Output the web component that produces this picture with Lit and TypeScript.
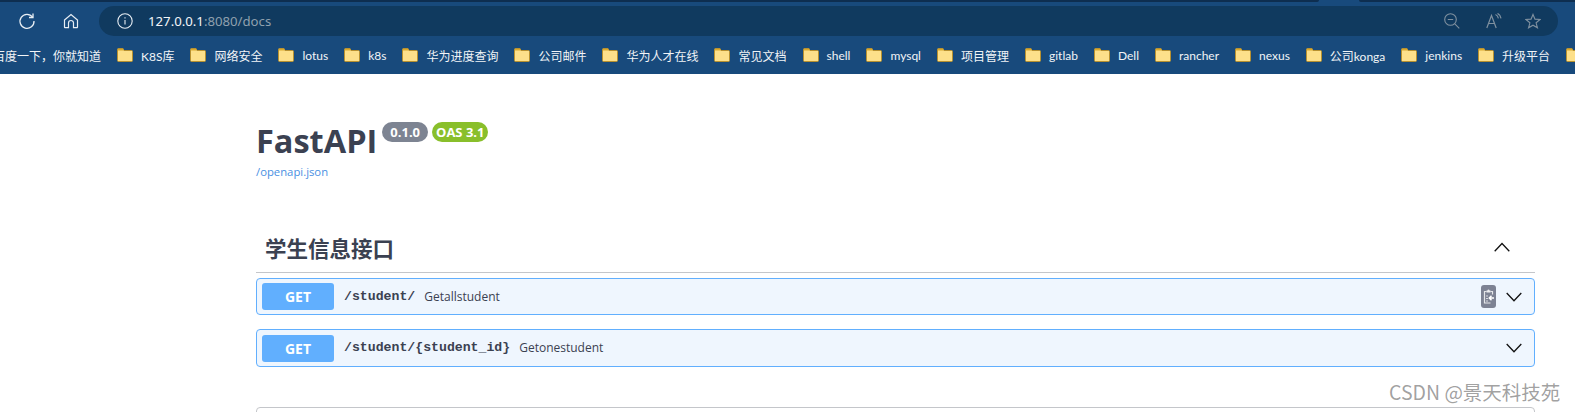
import { LitElement, html, css } from "lit";
import { customElement } from "lit/decorators.js";

const BOOKMARKS = ["K8S库","网络安全","lotus","k8s","华为进度查询","公司邮件","华为人才在线","常见文档","shell","mysql","项目管理","gitlab","Dell","rancher","nexus","公司konga","jenkins","升级平台"];

const folder = html`<svg class="folder" width="16" height="14" viewBox="0 0 16 14"><path d="M.5 2V12.5a1 1 0 0 0 1 1h13a1 1 0 0 0 1-1V3.5a1 1 0 0 0-1-1H7L6 .5H1.5a1 1 0 0 0-1 1z" fill="#fde08a" stroke="#b8912f"/><path d="M1 1h5l.7 1.6H1z" fill="#d9a92f"/></svg>`;

const chevron = (up: boolean) => html`<svg class="chev ${up ? "chev-up" : ""}" width="16" height="10" viewBox="0 0 16 10"><path d="${up ? "M.7 9.200 8 1.500 15.300 9.200" : "M.7 1 8 8.700 15.300 1"}" fill="none" stroke="#111" stroke-width="1.300"/></svg>`;

@customElement("app-root")
export class AppRoot extends LitElement {
  static styles = css`
    :host { display: block; width: 1575px; height: 412px; overflow: hidden; position: relative; background: #fff; font-family: "Lato", "Noto Sans CJK SC", sans-serif; }
    .tabs { display: flex; height: 6px; background: #184a7c; }
    .tab-dark { height: 2px; background: #0e2e50; }
    .tab-a { flex: 0 0 1319px; border-bottom-right-radius: 2px; }
    .tab-b { flex: 1; margin-left: 40px; border-bottom-left-radius: 2px; }
    .toolbar { display: flex; align-items: center; height: 30px; background: #184a7c; }
    .nav { flex: none; stroke: #e8eef4; fill: none; }
    .reload { margin-left: 18px; }
    .home { margin-left: 27px; }
    .address { display: flex; align-items: center; margin-left: 20px; width: 1459px; height: 30px; box-sizing: border-box; padding: 0 17px 0 18px; border-radius: 15px; background: #103a5f; }
    .url { margin-left: 15px; font-size: 13.2px; font-family: "Noto Sans", sans-serif; color: #8fa0ae; white-space: pre; }
    .url b { font-weight: 400; color: #f2f5f8; }
    .spacer { flex: 1; }
    .addr-ic { flex: none; stroke: #7f909f; fill: none; }
    .zoom-ic { margin-right: 26px; }
    .read-ic { margin-right: 23px; }
    .bookmarks { display: flex; align-items: center; height: 38px; background: #184a7c; overflow: hidden; white-space: nowrap; color: #f1f4f7; font-size: 12px; }
    .first { margin-left: -7px; margin-right: 16px; flex: none; }
    .bm { display: flex; align-items: center; gap: 8px; margin-right: 16px; flex: none; }
    .folder { flex: none; }
    .main { width: 1279px; margin-left: 256px; color: #3b4151; }
    .title-row { display: flex; align-items: flex-start; margin-top: 42px; height: 50px; }
    h1 { margin: 0; font: 700 32.500px/50px "Open Sans", sans-serif; }
    .badge { height: 20px; margin-top: 6px; border-radius: 10px; color: #fff; font: 700 13px/20px "Open Sans", sans-serif; }
    .ver { margin-left: 5px; padding: 0 8px; background: #7d8492; }
    .oas { margin-left: 4px; padding: 0 4px; background: #89bf2b; }
    .link { display: block; margin-top: -2px; color: #4990e2; font: 400 11.300px/16px "Open Sans", sans-serif; }
    .section { display: flex; align-items: center; justify-content: space-between; height: 48px; padding: 2px 25px 0 9px; margin-top: 42px; border-bottom: 1px solid #c4c6ca; }
    h2 { margin: 0; font: 700 21.500px/30px "Noto Sans CJK SC", sans-serif; }
    .chev-up { margin-bottom: 3px; }
    .op { display: flex; align-items: center; height: 37px; box-sizing: border-box; margin-top: 5px; padding: 0 12px 0 5px; border: 1px solid #61affe; border-radius: 4px; background: #eff6fe; }
    .op + .op { margin-top: 14px; height: 38px; }
    .get { width: 72px; height: 27px; border-radius: 3px; background: #61affe; color: #fff; text-align: center; font: 700 14px/27px "Open Sans", sans-serif; flex: none; }
    .path { margin-left: 10px; font: 700 13.200px/20px "Liberation Mono", monospace; white-space: pre; }
    .desc { margin-left: 9px; font: 400 12px/20px "Open Sans", sans-serif; }
    .copy { flex: none; margin-right: 10px; }
    .bottom { height: 40px; margin-top: 40px; box-sizing: border-box; border: 1px solid #c4c6ca; border-radius: 4px 4px 0 0; }
    .watermark { position: absolute; left: 1389px; top: 378px; color: rgba(90,90,90,.58); font: 400 19.500px/28px "Noto Sans CJK SC", sans-serif; white-space: nowrap; }
  `;

  render() {
    return html`
      <div class="tabs"><div class="tab-dark tab-a"></div><div class="tab-dark tab-b"></div></div>
      <div class="toolbar">
        <svg class="nav reload" width="18" height="18" viewBox="0 0 18 18" stroke-width="1.300"><path d="M14.600 5.200A7 7 0 1 0 16 9"/><path d="M15 1.500v4h-4"/></svg>
        <svg class="nav home" width="16" height="16" viewBox="0 0 16 16" stroke-width="1.200"><path d="M1.500 7 8 1.500 14.500 7v7a.7.7 0 0 1-.7.7H10.500V10a2.500 2.500 0 0 0-5 0v4.700H2.200a.7.7 0 0 1-.7-.7z"/></svg>
        <div class="address">
          <svg class="nav" width="16" height="16" viewBox="0 0 16 16" stroke-width="1.100"><circle cx="8" cy="8" r="7.200"/><path d="M8 7v4.500M8 4.300v1.300"/></svg>
          <span class="url"><b>127.0.0.1</b>:8080/docs</span>
          <span class="spacer"></span>
          <svg class="addr-ic zoom-ic" width="16" height="16" viewBox="0 0 16 16" stroke-width="1.100"><circle cx="6.500" cy="6.500" r="5.800"/><path d="M3.800 6.500h5.400M10.800 10.800l4.500 4.500"/></svg>
          <svg class="addr-ic read-ic" width="16" height="16" viewBox="0 0 16 16" stroke-width="1.200"><path d="M.8 15 5.500 2.500 10.200 15M2.600 10.500h5.800M9.500 1.500c1.700.7 2.600 2 2.900 3.800M11.500.4c1.900.9 3.200 2.700 3.500 4.900"/></svg>
          <svg class="addr-ic" width="16" height="16" viewBox="0 0 17 16" stroke-width="1.200"><path d="M8.500 1 10.600 6 16 6.400 11.800 9.900 13.200 15.200 8.500 12.400 3.800 15.200 5.200 9.900 1 6.400 6.400 6z"/></svg>
        </div>
      </div>
      <div class="bookmarks">
        <span class="first">百度一下，你就知道</span>
        ${BOOKMARKS.map((b) => html`<div class="bm">${folder}<span>${b}</span></div>`)}
        <div class="bm">${folder}</div>
      </div>
      <div class="main">
        <div class="title-row">
          <h1>FastAPI</h1>
          <span class="badge ver">0.1.0</span>
          <span class="badge oas">OAS 3.1</span>
        </div>
        <span class="link">/openapi.json</span>
        <div class="section"><h2>学生信息接口</h2>${chevron(true)}</div>
        <div class="op">
          <span class="get">GET</span>
          <span class="path">/student/</span>
          <span class="desc">Getallstudent</span>
          <span class="spacer"></span>
          <svg class="copy" width="15" height="23" viewBox="0 0 15 23">
            <rect width="15" height="23" rx="3" fill="#7d8293"/>
            <path d="M9.500 18H3.500V6.500H5.500M9.500 6.500H11.500V9.500" fill="none" stroke="#fff" stroke-opacity=".8" stroke-width="1.200"/>
            <path d="M5.500 7.500V5.500H6.500a1 1 0 0 1 2 0H9.500v2z" fill="#fff" fill-opacity=".85"/>
            <path d="M5 11h2M5 13.500h2M5 16h2" stroke="#fff" stroke-opacity=".7" stroke-width="1"/>
            <path d="M13 13H8.500M10.500 10.800 8.300 13l2.200 2.200" stroke="#fff" stroke-width="1.500" fill="none"/>
          </svg>
          ${chevron(false)}
        </div>
        <div class="op">
          <span class="get">GET</span>
          <span class="path">/student/{student_id}</span>
          <span class="desc">Getonestudent</span>
          <span class="spacer"></span>
          ${chevron(false)}
        </div>
        <div class="bottom"></div>
      </div>
      <div class="watermark">CSDN @景天科技苑</div>
    `;
  }
}
